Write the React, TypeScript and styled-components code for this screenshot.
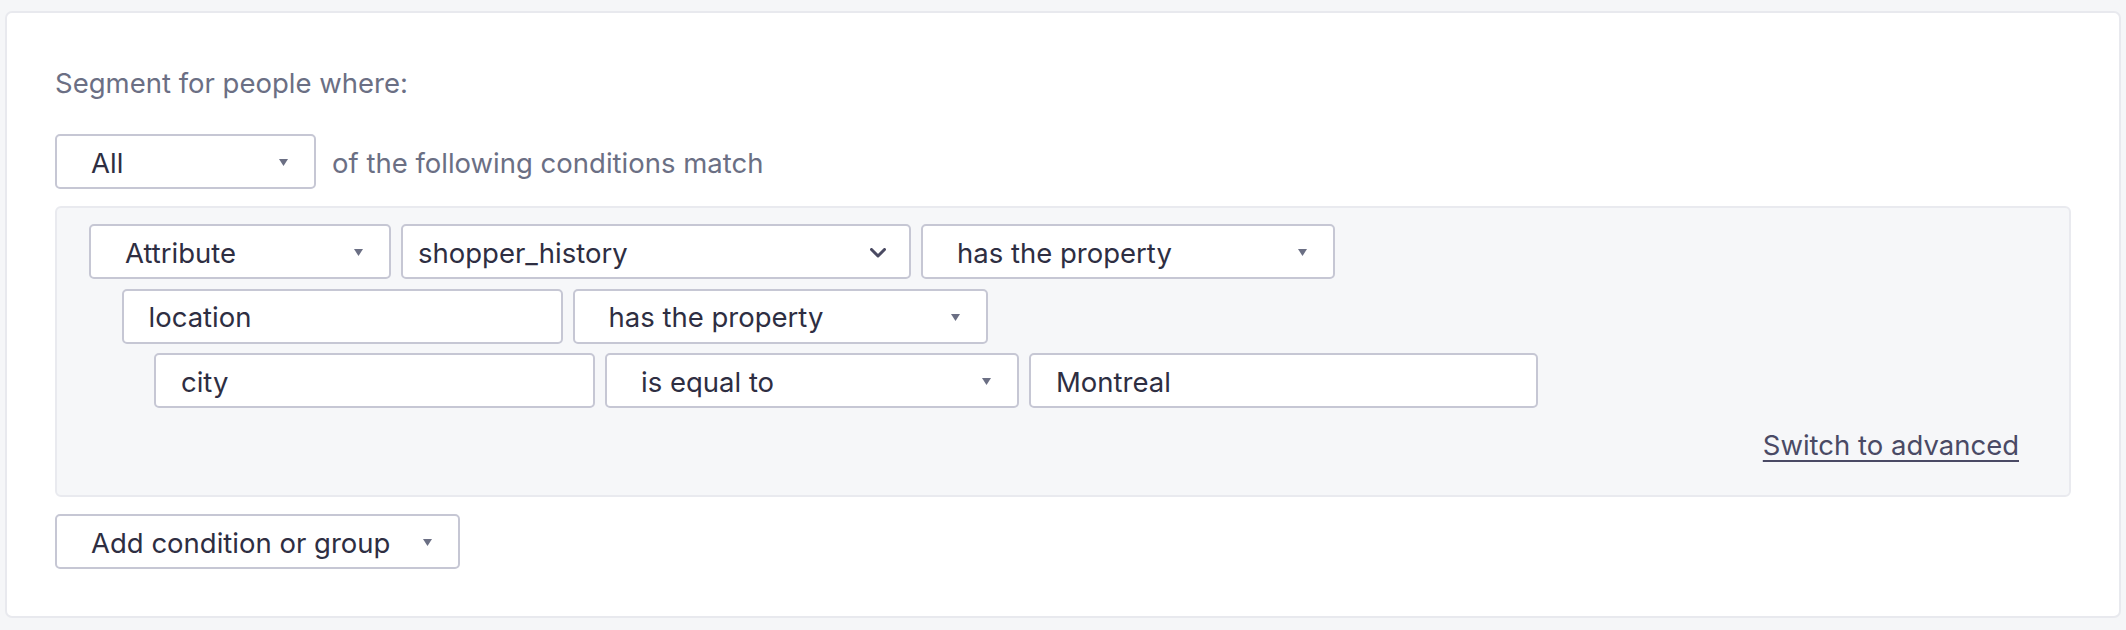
import React from 'react';
import styled, { createGlobalStyle } from 'styled-components';

const GlobalStyle = createGlobalStyle`
  html, body {
    margin: 0;
    padding: 0;
    background: #f5f6f8;
    font-family: Inter, "Noto Sans", "Liberation Sans", sans-serif;
  }
`;

const Caret = () => (
  <svg width="9" height="7" viewBox="0 0 9 7">
    <polygon points="0,0 9,0 4.5,7" fill="#6b6f84" />
  </svg>
);

const Chevron = () => (
  <svg width="16" height="10" viewBox="0 0 16 10">
    <polyline
      points="1.5,1.5 8,8 14.5,1.5"
      fill="none"
      stroke="#4a4a62"
      strokeWidth="3"
      strokeLinecap="round"
      strokeLinejoin="round"
    />
  </svg>
);

type Kind = 'select' | 'input' | 'combo';

const Dropdown: React.FC<{ width: number; kind?: Kind; children: React.ReactNode }> = ({
  width,
  kind = 'select',
  children,
}) => (
  <Box $width={width} $kind={kind}>
    <span>{children}</span>
    {kind === 'select' && (
      <Icon>
        <Caret />
      </Icon>
    )}
    {kind === 'combo' && (
      <Icon>
        <Chevron />
      </Icon>
    )}
  </Box>
);

const App: React.FC = () => {
  return (
    <>
      <GlobalStyle />
      <Page>
        <Card>
          <Title>Segment for people where:</Title>
          <MatchRow>
            <Dropdown width={261}>All</Dropdown>
            <MatchText>of the following conditions match</MatchText>
          </MatchRow>
          <Group>
            <ConditionRow $level={0}>
              <Dropdown width={302}>Attribute</Dropdown>
              <Dropdown width={510} kind="combo">
                shopper_history
              </Dropdown>
              <Dropdown width={414}>has the property</Dropdown>
            </ConditionRow>
            <ConditionRow $level={1}>
              <Dropdown width={441} kind="input">
                location
              </Dropdown>
              <Dropdown width={415}>has the property</Dropdown>
            </ConditionRow>
            <ConditionRow $level={2}>
              <Dropdown width={441} kind="input">
                city
              </Dropdown>
              <Dropdown width={414}>is equal to</Dropdown>
              <Dropdown width={509} kind="input">
                Montreal
              </Dropdown>
            </ConditionRow>
            <LinkRow>
              <SwitchLink href="#">Switch to advanced</SwitchLink>
            </LinkRow>
          </Group>
          <AddRow>
            <Dropdown width={405}>Add condition or group</Dropdown>
          </AddRow>
        </Card>
      </Page>
    </>
  );
};

export default App;

const Page = styled.div`
  padding: 11px 5px 12px;
`;

const Card = styled.div`
  background: #fff;
  border: 2px solid #e8e9ee;
  border-radius: 7px;
  padding: 50px 48px 47px;
  height: 607px;
  box-sizing: border-box;
`;

const Title = styled.div`
  font-size: 27.5px;
  line-height: 40px;
  color: #6b6f84;
`;

const MatchRow = styled.div`
  display: flex;
  align-items: center;
  margin-top: 31px;
`;

const MatchText = styled.span`
  margin-left: 16px;
  padding-top: 2px;
  font-size: 27.5px;
  color: #6b6f84;
`;

// 조건 박스 (select / input 공용)
const Box = styled.div<{ $width: number; $kind: Kind }>`
  display: flex;
  align-items: center;
  justify-content: space-between;
  width: ${(p) => p.$width}px;
  height: 55px;
  box-sizing: border-box;
  flex-shrink: 0;
  background: #fff;
  border: 2px solid #c6c7d4;
  border-radius: 5px;
  padding-left: ${(p) => (p.$kind === 'select' ? 34 : p.$kind === 'combo' ? 15 : 25)}px;
  padding-right: ${(p) => (p.$kind === 'combo' ? 23 : 26)}px;
  font-size: 27.5px;
  color: #2e2e42;
  > span {
    white-space: nowrap;
    padding-top: 2px;
  }
`;

const Icon = styled.span`
  display: flex;
  align-items: center;
`;

const Group = styled.div`
  margin-top: 17px;
  background: #f6f7f9;
  border: 2px solid #e9eaef;
  border-radius: 6px;
  padding: 16px 50px 30px 32px;
  display: flex;
  flex-direction: column;
  gap: 9.5px;
`;

const ConditionRow = styled.div<{ $level: number }>`
  display: flex;
  gap: 10px;
  padding-left: ${(p) => p.$level * 32.5}px;
`;

const LinkRow = styled.div`
  display: flex;
  justify-content: flex-end;
  margin-top: 7.5px;
  line-height: 40px;
`;

const SwitchLink = styled.a`
  font-size: 27.5px;
  color: #4a4a65;
  text-decoration: underline;
  text-underline-offset: 5px;
  text-decoration-thickness: 2px;
`;

const AddRow = styled.div`
  display: flex;
  margin-top: 17px;
`;
